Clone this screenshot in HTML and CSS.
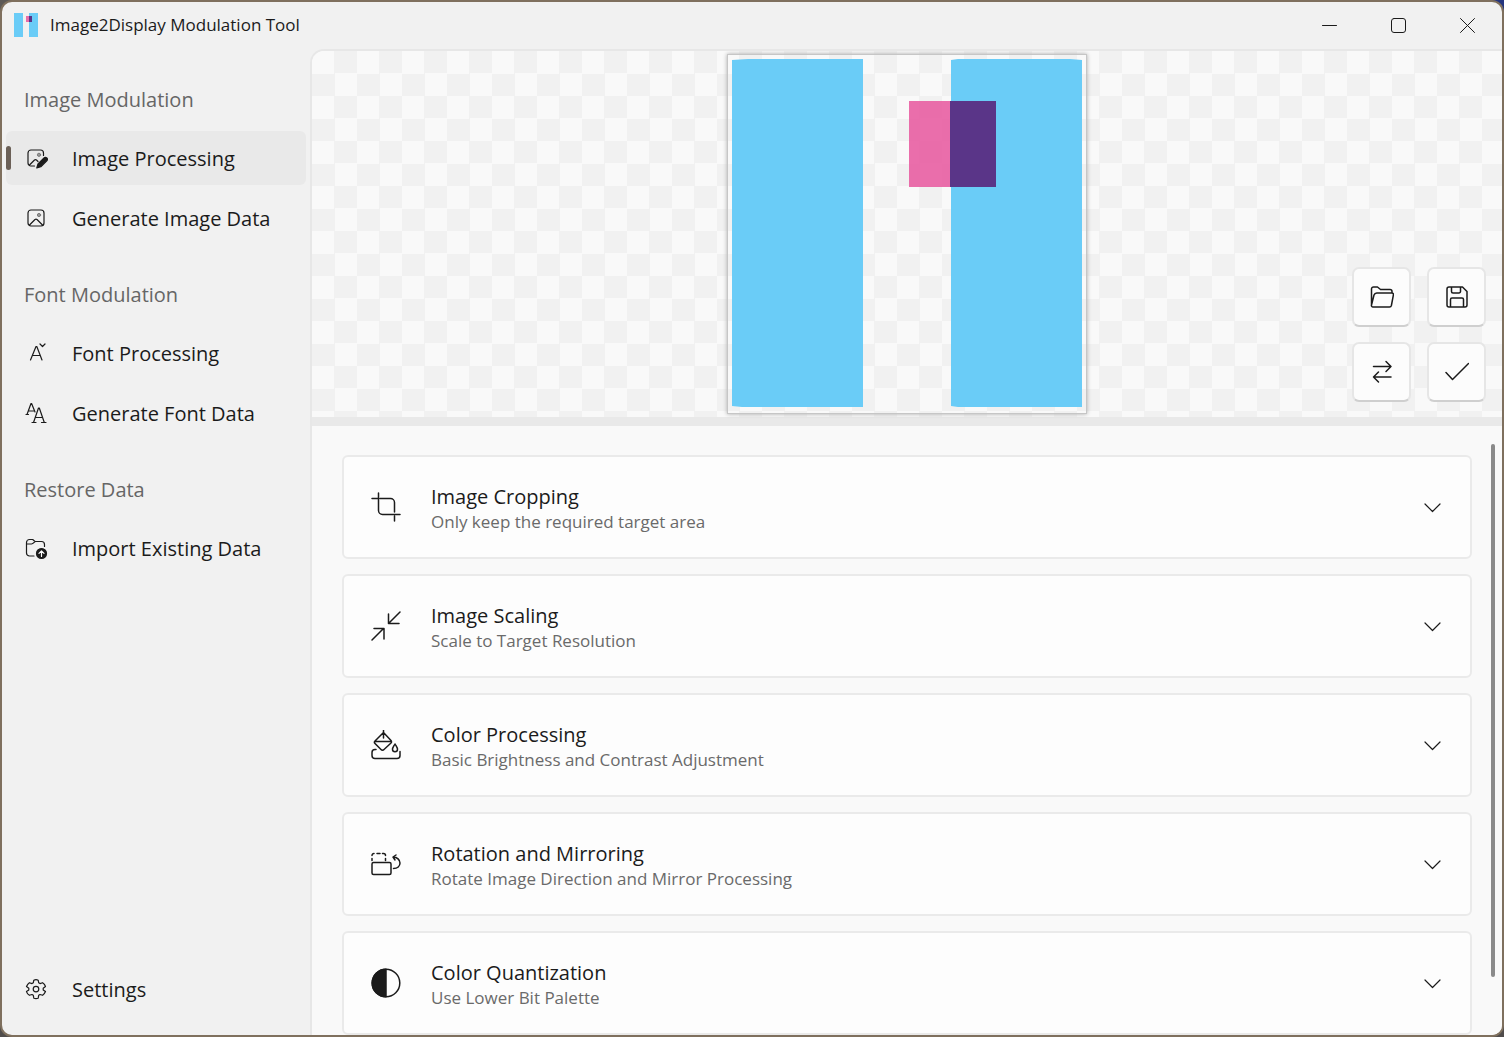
FILE: index.html
```html
<!DOCTYPE html>
<html lang="en">
<head>
<meta charset="utf-8">
<title>Image2Display Modulation Tool</title>
<link rel="stylesheet" href="styles.css">
</head>
<body>
<div class="window">
  <header class="titlebar">
    <svg class="logo" viewBox="0 0 24 24" aria-hidden="true"><path fill="#6accf7" d="M0 0h9v24H0zM15 0h9v24h-9z"/><path fill="#e96ca8" d="M12 3h3v6h-3z"/><path fill="#5a3588" d="M15 3h3v6h-3z"/></svg>
    <h1 class="app-title">Image2Display Modulation Tool</h1>
    <div class="caption-buttons">
      <button class="caption-button" type="button" aria-label="Minimize"><svg class="icon icon-small" viewBox="0 0 16 16"><path d="M.5 8.500h14"/></svg></button>
      <button class="caption-button" type="button" aria-label="Maximize"><svg class="icon icon-small" viewBox="0 0 16 16"><rect x=".5" y="1.500" width="14" height="14" rx="2.500"/></svg></button>
      <button class="caption-button" type="button" aria-label="Close"><svg class="icon icon-small" viewBox="0 0 16 16"><path d="M.5 1.500l14 14M14.500 1.500l-14 14"/></svg></button>
    </div>
  </header>

  <div class="workspace">
    <nav class="sidebar" aria-label="Main">
      <section class="nav-group">
        <h2 class="nav-heading">Image Modulation</h2>
        <a class="nav-item nav-item-active" href="#processing" aria-current="page">
          <svg class="icon nav-icon" viewBox="0 0 24 24"><path d="M10.500 20H7a3 3 0 0 1-3-3V7a3 3 0 0 1 3-3h9.500a3 3 0 0 1 3 3v2.500M5.500 19l5-5a1.500 1.500 0 0 1 2 0L14 15.500"/><circle cx="15" cy="8.800" r="1.600" class="muted"/><path class="solid" d="M12.800 22l1.200-4 6-6a1.900 1.900 0 0 1 2.800 2.800l-6 6z"/></svg>
          <span>Image Processing</span></a>
        <a class="nav-item" href="#image-data">
          <svg class="icon nav-icon" viewBox="0 0 24 24"><rect x="4" y="4" width="16" height="16" rx="3"/><path d="M5.500 19l5.500-5.500a1.500 1.500 0 0 1 2 0L18.500 19"/><circle cx="15" cy="9" r="1.600" class="muted"/></svg>
          <span>Generate Image Data</span></a>
      </section>
      <section class="nav-group">
        <h2 class="nav-heading">Font Modulation</h2>
        <a class="nav-item" href="#font-processing">
          <svg class="icon nav-icon" viewBox="0 0 24 24"><path d="M6.500 19L12 5.500h.8L18 19M8.500 14.500h7.500M16 3l2.500 2.500L21 3"/></svg>
          <span>Font Processing</span></a>
        <a class="nav-item" href="#font-data">
          <svg class="icon nav-icon" viewBox="0 0 24 24"><path d="M2 13.500h2.500M3 13.500L7 2.500h.6L11 11M4.500 10h5M8 21.500h4M17.500 21.500H22M9.500 21.500L14.500 7h.8l5 14.500M11.300 16.500h7.400"/></svg>
          <span>Generate Font Data</span></a>
      </section>
      <section class="nav-group">
        <h2 class="nav-heading">Restore Data</h2>
        <a class="nav-item" href="#import">
          <svg class="icon nav-icon" viewBox="0 0 24 24"><path d="M10 20H5.500a3 3 0 0 1-3-3V6.500a3 3 0 0 1 3-3h3.200l2.300 2h6.500a3 3 0 0 1 3 3v2M2.500 8h5c1.500 0 2-1 3.500-2.500"/><circle class="solid" cx="17.500" cy="17.500" r="5"/><path class="knockout" d="M17.500 20.500V15M15 17.300l2.500-2.500 2.500 2.500"/></svg>
          <span>Import Existing Data</span></a>
      </section>
      <a class="nav-item nav-settings" href="#settings">
        <svg class="icon nav-icon" viewBox="0 0 24 24"><path d="M9.800 3.200Q12 2 14.200 3.200L14.700 5.800L16 6.600L18.600 5.700Q20.800 7 21.500 9.500L19.200 11.300V12.900L21.500 14.600Q20.500 17 18.600 18.300L16 17.500L14.700 18.300L14.200 21.200Q12 22 9.800 21.200L9.300 18.300L8 17.500L5.400 18.300Q3.200 17 2.500 14.600L4.800 12.900V11.300L2.500 9.500Q3.500 7 5.400 5.700L8 6.600L9.300 5.800Z"/><circle cx="12" cy="12.100" r="2.800"/></svg>
        <span>Settings</span></a>
    </nav>

    <main class="panel">
      <section class="preview" aria-label="Preview">
        <div class="picture">
          <svg class="picture-art" viewBox="0 0 350 350" role="img" aria-label="Loaded picture"><path fill="#6accf7" d="M0 1L16 0H131V348H10L0 347zM219 1L226 0H338L350 1V348H226L219 347z"/><path fill="#e75a9f" fill-opacity=".88" d="M177 42h42v86h-42z"/><path fill="#5a3588" d="M218 42h46v86h-46z"/></svg>
        </div>
        <div class="toolbar">
          <button class="tool-button" type="button" aria-label="Open"><svg class="icon tool-icon" viewBox="0 0 24 24"><path d="M1.500 20V4a2 2 0 0 1 2-2h4l3 2.500h9.500a2 2 0 0 1 2 2V8M7 8h15a1.500 1.500 0 0 1 1.400 1.800l-2 10.700a2 2 0 0 1-2 1.500H3a1.500 1.500 0 0 1-1.500-2L4 10a3 3 0 0 1 3-2z"/></svg></button>
          <button class="tool-button" type="button" aria-label="Save"><svg class="icon tool-icon" viewBox="0 0 24 24"><path d="M4 2h13.500L22 6.500V20a2 2 0 0 1-2 2H4a2 2 0 0 1-2-2V4a2 2 0 0 1 2-2zM6.500 2v4.500A1.500 1.500 0 0 0 8 8h6a1.500 1.500 0 0 0 1.500-1.500V2M5.500 22v-7.500A1.500 1.500 0 0 1 7 13h10a1.500 1.500 0 0 1 1.500 1.500V22"/></svg></button>
          <button class="tool-button" type="button" aria-label="Swap"><svg class="icon tool-icon" viewBox="0 0 24 24"><path d="M3.500 6.500H21M16 1.500l5 5-5 5M21 17H3.500M8.500 12l-5 5 5 5"/></svg></button>
          <button class="tool-button" type="button" aria-label="Apply"><svg class="icon tool-icon" viewBox="0 0 24 24"><path d="M1 12.500l6.500 7L23.500 3.500"/></svg></button>
        </div>
      </section>
      <div class="splitter" role="separator"></div>
      <div class="options">
        <ul class="cards">
          <li><button class="card" type="button" aria-expanded="false">
            <svg class="icon card-icon" viewBox="0 0 30 30"><path d="M1 6.500h6M9 6.500h10.500a4 4 0 0 1 4 4V20M7.500 1v17.500a4 4 0 0 0 4 4H29M23.500 24v5"/></svg>
            <span class="card-text"><span class="card-title">Image Cropping</span><span class="card-note">Only keep the required target area</span></span>
            <svg class="icon chevron" viewBox="0 0 18 18"><path d="M1 6l7.500 7.500L16 6"/></svg></button></li>
          <li><button class="card" type="button" aria-expanded="false">
            <svg class="icon card-icon" viewBox="0 0 30 30"><path d="M29 1L17.500 12.500M17.500 3v9.500H28M1 29l11.500-11.500M3 17.500h10V28"/></svg>
            <span class="card-text"><span class="card-title">Image Scaling</span><span class="card-note">Scale to Target Resolution</span></span>
            <svg class="icon chevron" viewBox="0 0 18 18"><path d="M1 6l7.500 7.500L16 6"/></svg></button></li>
          <li><button class="card" type="button" aria-expanded="false">
            <svg class="icon card-icon" viewBox="0 0 30 30"><path d="M12.500 0v8M12.500 2.500L4 11a1.800 1.800 0 0 0 0 2.500L10 19.500a2 2 0 0 0 3 0L20 13Q21 12 20 10.500L12.500 2.500M3.500 11.500h17M24 14c1.200 2.200 2.500 3.600 2.500 5.300a2.500 2.500 0 0 1-5 0c0-1.700 1.300-3.100 2.500-5.300zM5 19.500H4a3 3 0 0 0-3 3V25.500a3 3 0 0 0 3 3h22a3 3 0 0 0 3-3v-4"/></svg>
            <span class="card-text"><span class="card-title">Color Processing</span><span class="card-note">Basic Brightness and Contrast Adjustment</span></span>
            <svg class="icon chevron" viewBox="0 0 18 18"><path d="M1 6l7.500 7.500L16 6"/></svg></button></li>
          <li><button class="card" type="button" aria-expanded="false">
            <svg class="icon card-icon" viewBox="0 0 30 30"><rect x="1" y="13.500" width="19" height="12" rx="1.500"/><path d="M1 11.500V9.500M1 6.500A2 2 0 0 1 3 4.500M6 4.500h3M11.500 4.500h1A2 2 0 0 1 14.500 6.500M14.500 9.500v2M22.500 19.500c4 0 6.500-2.500 6.500-5.500S26 8 22.500 8M25 6L22 8l2 3"/></svg>
            <span class="card-text"><span class="card-title">Rotation and Mirroring</span><span class="card-note">Rotate Image Direction and Mirror Processing</span></span>
            <svg class="icon chevron" viewBox="0 0 18 18"><path d="M1 6l7.500 7.500L16 6"/></svg></button></li>
          <li><button class="card" type="button" aria-expanded="false">
            <svg class="icon card-icon" viewBox="0 0 30 30"><circle cx="15" cy="15" r="13.800"/><path class="solid" d="M15 1.200a13.800 13.800 0 0 0 0 27.600z"/></svg>
            <span class="card-text"><span class="card-title">Color Quantization</span><span class="card-note">Use Lower Bit Palette</span></span>
            <svg class="icon chevron" viewBox="0 0 18 18"><path d="M1 6l7.500 7.500L16 6"/></svg></button></li>
        </ul>
        <div class="scroll-thumb"></div>
      </div>
    </main>
  </div>
</div>
</body>
</html>
```
FILE: styles.css
```css
* { box-sizing: border-box; }

body {
  margin: 0;
  background: linear-gradient(90deg, #5c5957 50%, #24357f 50%) top / 100% 20px no-repeat #504c4b;
  font-family: "Open Sans", "Noto Sans", sans-serif;
  font-size: 20px;
  color: #1b1b1b;
}

h1, h2, ul { margin: 0; padding: 0; font-weight: 400; }
ul { list-style: none; }
button { font: inherit; color: inherit; cursor: pointer; }

.window {
  display: flex;
  flex-direction: column;
  height: 100vh;
  border: 2px solid #7f705e;
  border-radius: 12px;
  background: #f1f1f1;
  overflow: hidden;
}

.icon {
  display: block;
  flex: none;
  fill: none;
  stroke: #1b1b1b;
  stroke-width: 1.5;
  stroke-linecap: round;
  stroke-linejoin: round;
}
.icon .solid { fill: #1b1b1b; }
.icon .muted { fill: #9a9a9a; stroke: #777; stroke-width: 1; }
.icon .knockout { stroke: #fff; }

/* Title bar */
.titlebar {
  display: flex;
  flex: none;
  align-items: center;
  height: 47px;
  padding: 0 0 2px 12px;
  gap: 12px;
}
.logo { width: 24px; height: 24px; }
.app-title { font-size: 17px; line-height: 24px; }
.caption-buttons { display: flex; align-self: stretch; margin-left: auto; }
.caption-button {
  display: grid;
  place-items: center;
  width: 69px;
  padding: 0;
  border: 0;
  background: none;
}
.icon-small { width: 16px; height: 16px; overflow: visible; stroke-width: 1; }

.workspace { display: flex; flex: 1; min-height: 0; }

/* Sidebar */
.sidebar {
  display: flex;
  flex: none;
  flex-direction: column;
  gap: 21px;
  width: 308px;
  padding: 22px 4px 19px;
}
.nav-group { display: flex; flex-direction: column; gap: 6px; }
.nav-heading {
  height: 54px;
  padding-left: 18px;
  font-size: 20px;
  font-weight: 500;
  line-height: 58px;
  color: #666;
}
.nav-item {
  position: relative;
  display: flex;
  align-items: center;
  gap: 24px;
  height: 54px;
  padding-left: 18px;
  border-radius: 6px;
  color: inherit;
  text-decoration: none;
}
.nav-item-active { background: #e9e9e9; }
.nav-item-active::before {
  content: "";
  position: absolute;
  left: 0;
  top: 15px;
  width: 5px;
  height: 24px;
  border-radius: 3px;
  background: #6b6057;
}
.nav-icon { width: 24px; height: 24px; stroke-width: 1.2; }
.nav-settings { margin-top: auto; }

/* Main panel */
.panel {
  display: flex;
  flex: 1;
  flex-direction: column;
  min-width: 0;
  border: solid #e7e7e7;
  border-width: 2px 0 0 2px;
  border-top-left-radius: 14px;
  background: #f9f9f9;
  overflow: hidden;
}
.preview {
  position: relative;
  display: grid;
  place-items: center;
  flex: none;
  height: 366px;
  background: repeating-conic-gradient(#f1f1f1 0 25%, #f9f9f9 0 50%) 0 0 / 45px 45px;
}
.picture {
  padding: 4px;
  border: 1px solid #c6c6c6;
  box-shadow: 0 0 4px #aaa;
}
.picture-art { display: block; width: 350px; height: 350px; }

.toolbar {
  position: absolute;
  right: 16px;
  bottom: 15px;
  display: grid;
  grid-template-columns: 59px 59px;
  gap: 15px 16px;
}
.tool-button {
  display: grid;
  place-items: center;
  height: 60px;
  padding: 0;
  border: 2px solid #e6e6e6;
  border-bottom-color: #cfcfcf;
  border-radius: 7px;
  background: #fcfcfc;
}
.tool-icon { width: 24px; height: 24px; }

.splitter { flex: none; height: 9px; background: #e9e9e9; }

/* Option cards */
.options { position: relative; flex: 1; min-height: 0; }
.cards {
  display: flex;
  flex-direction: column;
  gap: 15px;
  height: 100%;
  padding: 29px 30px 0;
  overflow-y: auto;
  scrollbar-width: none;
}
.card {
  display: flex;
  align-items: center;
  width: 100%;
  height: 104px;
  padding: 0 28px 0 27px;
  border: 2px solid #eaeaea;
  border-radius: 6px;
  background: #fdfdfd;
  text-align: left;
}
.card-icon { width: 30px; height: 30px; margin-right: 30px; }
.card-text { display: flex; flex: 1; flex-direction: column; min-width: 0; padding-top: 4px; }
.card-title { line-height: 26px; }
.card-note { font-size: 17px; line-height: 24px; color: #6a6a6a; }
.chevron { width: 18px; height: 18px; stroke-width: 1.2; }

.scroll-thumb {
  position: absolute;
  top: 18px;
  right: 7px;
  bottom: 58px;
  width: 4px;
  border-radius: 2px;
  background: #8a8a8a;
}
```
